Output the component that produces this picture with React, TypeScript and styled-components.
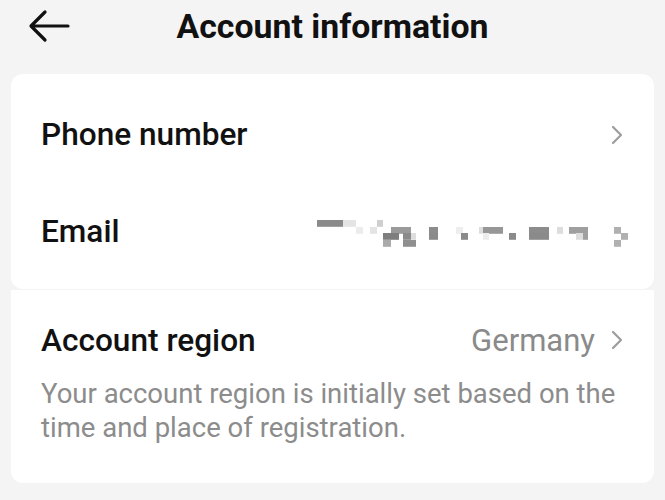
import React from "react";
import styled, { createGlobalStyle } from "styled-components";

const Global = createGlobalStyle`
  html, body { margin: 0; padding: 0; background: #f4f4f4; }
  body { font-family: Roboto, "Liberation Sans", Arial, sans-serif; -webkit-font-smoothing: antialiased; }
`;

const Page = styled.div`
  width: 665px;
  height: 500px;
  background: #f4f4f4;
  display: flex;
  flex-direction: column;
  overflow: hidden;
`;

const Header = styled.header`
  height: 52px;
  display: grid;
  grid-template-columns: 80px 1fr 80px;
  align-items: center;
  margin-bottom: 22px;
`;

const BackButton = styled.button`
  border: 0;
  background: none;
  padding: 0 0 0 28px;
  display: flex;
  align-items: center;
  height: 52px;
  cursor: pointer;
`;

const Title = styled.h1`
  margin: 0;
  text-align: center;
  font-family: Roboto, "Liberation Sans", sans-serif;
  font-weight: 700;
  font-size: 33.8px;
  color: #111;
`;

const Card = styled.section<{ $top?: boolean; $bottom?: boolean }>`
  margin: 0 11px;
  background: #fff;
  border-radius: ${(p) => (p.$top ? "12px" : "0")} ${(p) => (p.$top ? "12px" : "0")}
    ${(p) => (p.$bottom ? "12px" : "0")} ${(p) => (p.$bottom ? "12px" : "0")};
  display: flex;
  flex-direction: column;
`;

const FirstCard = styled(Card)`
  padding: 12px 0 9px;
  margin-bottom: 1px;
`;

const SecondCard = styled(Card)`
  padding: 15px 0 38px;
`;

const Row = styled.div<{ $h: number }>`
  height: ${(p) => p.$h}px;
  display: flex;
  align-items: center;
  justify-content: space-between;
  padding: 0 30px 0 30px;
`;

const Label = styled.span`
  font-family: Roboto, "Liberation Sans", sans-serif;
  font-weight: 500;
  font-size: 31.6px;
  color: #111;
`;

const Value = styled.span`
  display: flex;
  align-items: center;
  gap: 15px;
  font-family: Roboto, "Liberation Sans", sans-serif;
  font-weight: 400;
  font-size: 31px;
  color: #8a8a8a;
`;

const Description = styled.p`
  margin: 0;
  padding: 2px 30px 0;
  font-family: Roboto, "Liberation Sans", sans-serif;
  font-weight: 400;
  font-size: 27.5px;
  line-height: 34px;
  color: #8c8c8c;
`;

const Chevron = () => (
  <svg width="14" height="20" viewBox="0 0 14 20" fill="none">
    <path d="M3 2 L11 10 L3 18" stroke="#9d9d9d" strokeWidth="2.2" strokeLinecap="round" strokeLinejoin="round" />
  </svg>
);

const BackArrow = () => (
  <svg width="42" height="34" viewBox="0 0 42 34" fill="none">
    <path d="M40 17 H4 M17 3 L3 17 L17 31" stroke="#111" strokeWidth="3.2" strokeLinecap="round" strokeLinejoin="round" />
  </svg>
);

type R = [number, number, number, string];
const mosaic: R[] = [
  [316, 225, 26, "#8a8a8a"],
  [342, 225, 13, "#e4e4e4"],
  [376, 225, 6, "#cfcfcf"],
  [355, 232, 7, "#ececec"],
  [369, 232, 7, "#e4e4e4"],
  [390, 232, 20, "#9a9a9a"],
  [428, 232, 9, "#8c8c8c"],
  [455, 232, 7, "#eeeeee"],
  [478, 232, 4, "#dddddd"],
  [482, 232, 20, "#979797"],
  [528, 232, 20, "#8c8c8c"],
  [556, 232, 6, "#dddddd"],
  [568, 232, 19, "#9f9f9f"],
  [613, 232, 7, "#b0b0b0"],
  [382, 238, 16, "#7e7e7e"],
  [402, 238, 8, "#8a8a8a"],
  [410, 238, 5, "#dddddd"],
  [428, 238, 9, "#8a8a8a"],
  [460, 238, 7, "#8a8a8a"],
  [482, 238, 6, "#ececec"],
  [508, 238, 7, "#8a8a8a"],
  [528, 238, 20, "#8a8a8a"],
  [575, 238, 7, "#dddddd"],
  [582, 238, 5, "#a0a0a0"],
  [620, 238, 7, "#b0b0b0"],
  [382, 245, 8, "#aaaaaa"],
  [402, 245, 13, "#8f8f8f"],
  [613, 245, 7, "#b0b0b0"],
];

const Mosaic = () => (
  <svg width="315" height="30" viewBox="314 222 315 30" aria-hidden>
    {mosaic.map(([x, y, w, c], i) => (
      <rect key={i} x={x} y={y} width={w} height={6.8} fill={c} />
    ))}
  </svg>
);

const EmailRow = styled(Row)`
  padding-right: 24px;
`;

export default function App() {
  return (
    <>
      <Global />
      <Page>
        <Header>
          <BackButton aria-label="Back">
            <BackArrow />
          </BackButton>
          <Title>Account information</Title>
          <span />
        </Header>
        <FirstCard $top $bottom>
          <Row $h={97}>
            <Label>Phone number</Label>
            <Value>
              <Chevron />
            </Value>
          </Row>
          <EmailRow $h={97}>
            <Label>Email</Label>
            <Mosaic />
          </EmailRow>
        </FirstCard>
        <SecondCard $bottom>
          <Row $h={70}>
            <Label>Account region</Label>
            <Value>
              Germany
              <Chevron />
            </Value>
          </Row>
          <Description>
            Your account region is initially set based on the time and place of registration.
          </Description>
        </SecondCard>
      </Page>
    </>
  );
}
